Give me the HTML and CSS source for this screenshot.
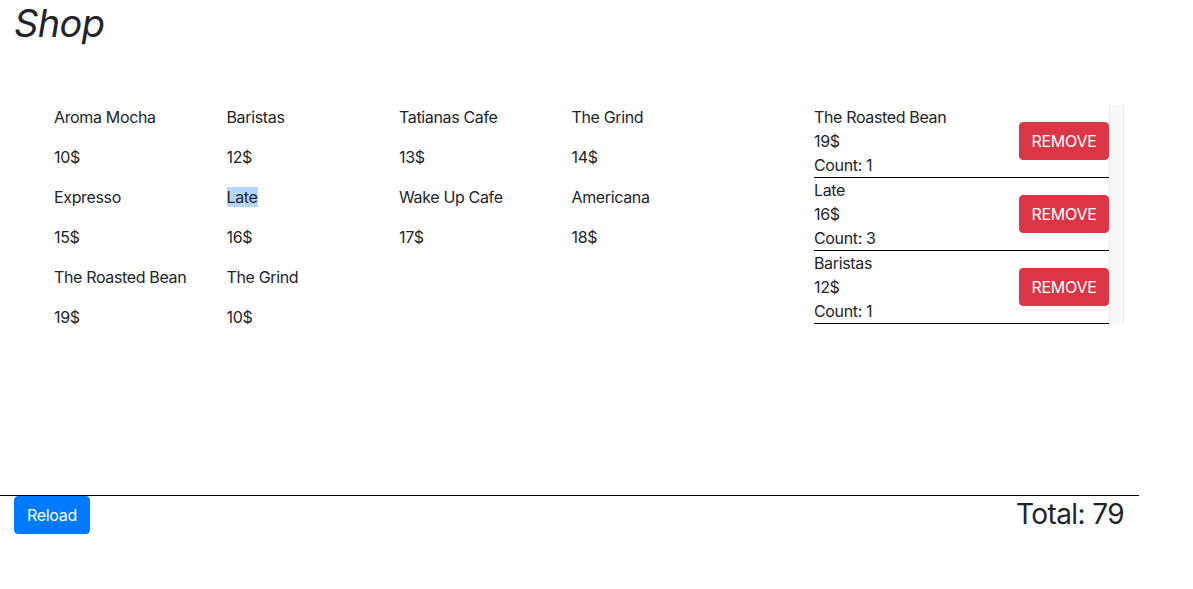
FILE: index.html
```html
<!DOCTYPE html>
<html>
<head>
<meta charset="utf-8">
<link rel="stylesheet" href="styles.css">
</head>
<body>
<div class="app">
  <h1 class="title">Shop</h1>
  <div class="main">
    <div class="products">
      <div class="product"><p>Aroma Mocha</p><p>10$</p></div>
      <div class="product"><p>Baristas</p><p>12$</p></div>
      <div class="product"><p>Tatianas Cafe</p><p>13$</p></div>
      <div class="product"><p>The Grind</p><p>14$</p></div>
      <div class="product"><p>Expresso</p><p>15$</p></div>
      <div class="product"><p><span class="selected">Late</span></p><p>16$</p></div>
      <div class="product"><p>Wake Up Cafe</p><p>17$</p></div>
      <div class="product"><p>Americana</p><p>18$</p></div>
      <div class="product"><p>The Roasted Bean</p><p>19$</p></div>
      <div class="product"><p>The Grind</p><p>10$</p></div>
    </div>
    <div class="cart">
      <div class="cart-list">
        <div class="cart-item">
          <div class="cart-info"><div>The Roasted Bean</div><div>19$</div><div>Count: 1</div></div>
          <button class="btn btn-danger">REMOVE</button>
        </div>
        <div class="cart-item">
          <div class="cart-info"><div>Late</div><div>16$</div><div>Count: 3</div></div>
          <button class="btn btn-danger">REMOVE</button>
        </div>
        <div class="cart-item">
          <div class="cart-info"><div>Baristas</div><div>12$</div><div>Count: 1</div></div>
          <button class="btn btn-danger">REMOVE</button>
        </div>
      </div>
      <div class="track"></div>
    </div>
  </div>
  <div class="footer">
    <button class="btn btn-primary">Reload</button>
    <h3 class="total">Total: 79</h3>
  </div>
</div>
</body>
</html>
```

FILE: styles.css
```css
* { box-sizing: border-box; }
body {
  margin: 0;
  font-family: Inter, "Noto Sans", sans-serif;
  font-size: 16px;
  line-height: 24px;
  letter-spacing: -0.35px;
  color: #212529;
  background: #fff;
}
.title {
  margin: 0;
  padding: 2px 0 0 14px;
  font-size: 38px;
  font-style: italic;
  font-weight: 400;
  letter-spacing: -0.6px;
  line-height: 42px;
  height: 105px;
}
.main {
  display: flex;
  height: 390px;
}
.products {
  display: grid;
  grid-template-columns: repeat(4, 172.5px);
  align-content: start;
  margin-left: 54px;
  width: 760px;
}
.product p {
  margin: 0 0 16px 0;
}
.selected {
  background: #b3d7fe;
}
.cart {
  display: flex;
  align-items: stretch;
  align-self: flex-start;
}
.cart-list {
  width: 295px;
}
.cart-item {
  display: flex;
  justify-content: space-between;
  align-items: center;
  border-bottom: 1px solid #000;
}
.track {
  width: 15px;
  background: #f8f8f8;
  border-left: 1px solid #ececec;
  border-right: 1px solid #ececec;
}
.btn {
  font-family: inherit;
  font-size: 16px;
  line-height: 24px;
  letter-spacing: -0.3px;
  padding: 6px 0;
  border: 1px solid transparent;
  border-radius: 4px;
  color: #fff;
  cursor: pointer;
  text-align: center;
}
.btn-danger {
  background: #dc3545;
  border-color: #dc3545;
  width: 90px;
}
.btn-primary {
  background: #007bff;
  border-color: #007bff;
  width: 76px;
}
.footer {
  width: 1139px;
  border-top: 1px solid #000;
  display: flex;
  justify-content: space-between;
  align-items: flex-start;
  padding: 0 15px 0 14px;
}
.total {
  margin: 0;
  font-size: 28px;
  font-weight: 400;
  letter-spacing: -0.6px;
  line-height: 36px;
}
```
